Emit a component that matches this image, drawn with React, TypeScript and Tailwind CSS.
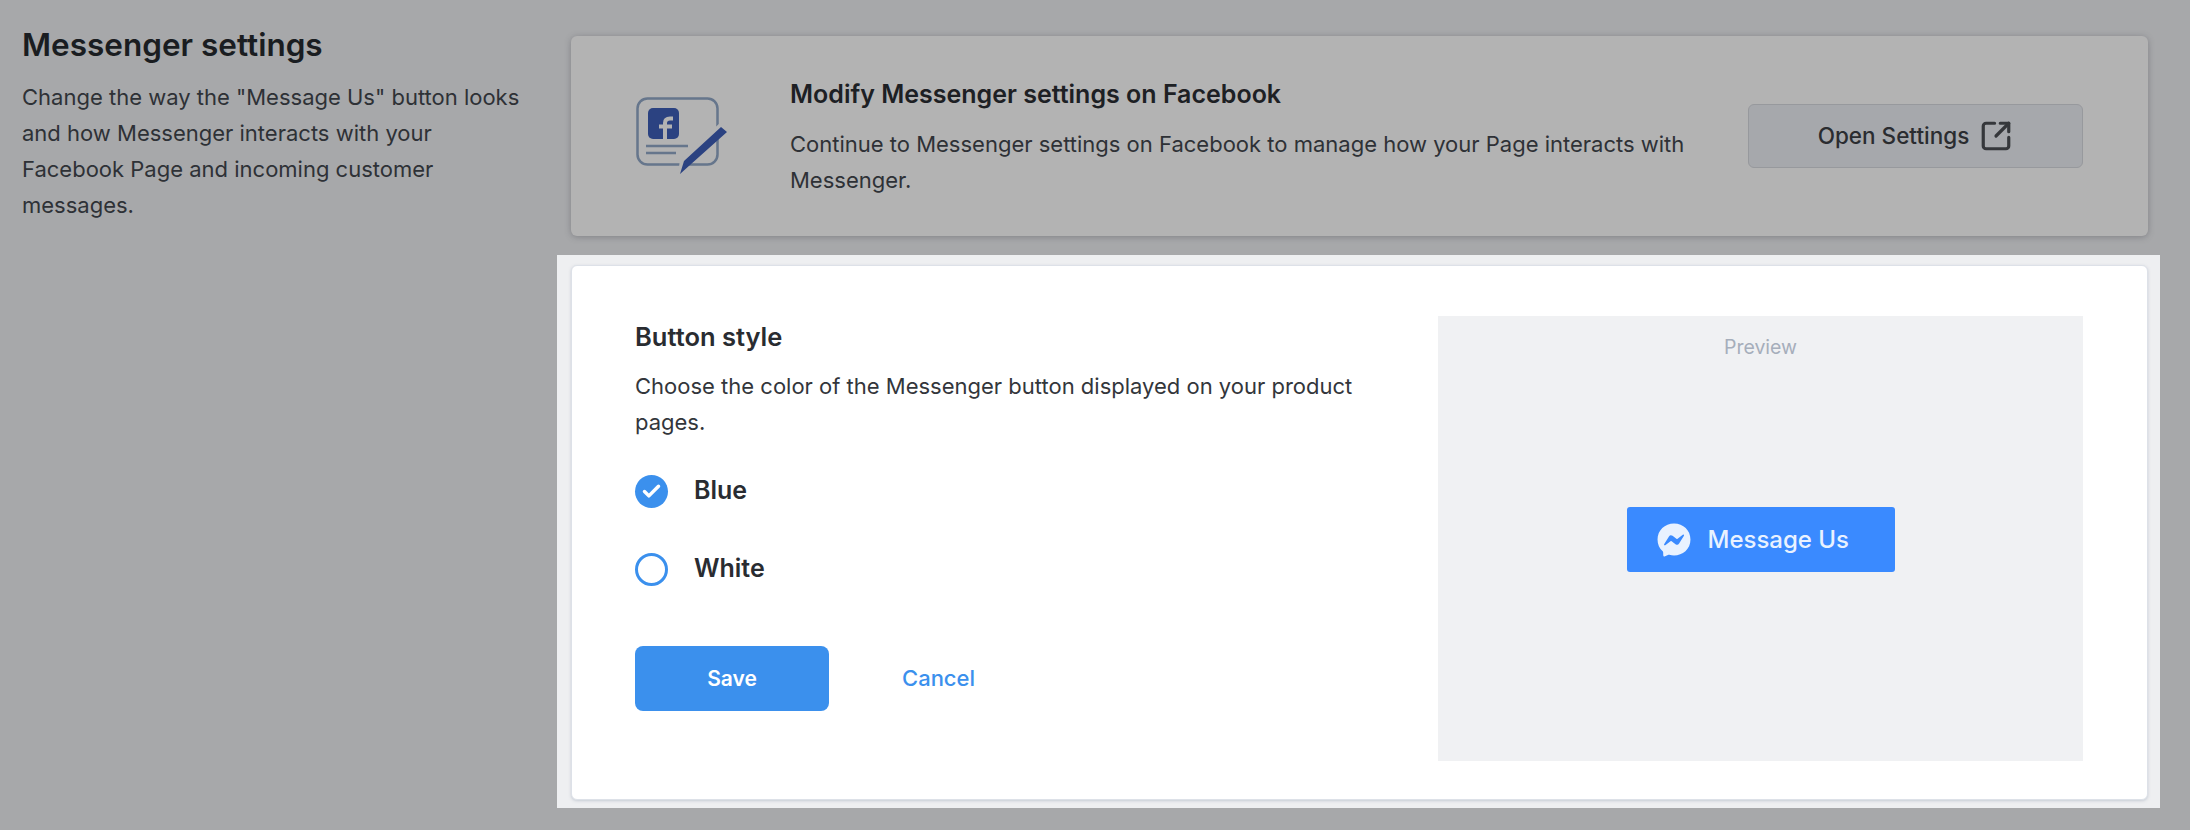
import { SquareArrowOutUpRight, Check } from 'lucide-react';
import { FaFacebookMessenger } from 'react-icons/fa';

const ModifyIcon = () => (
  <svg className="shrink-0" width="92" height="78" viewBox="0 0 92 78" fill="none">
    <rect x="1.500" y="1.500" width="80" height="66" rx="10" stroke="#66768c" strokeWidth="2.500" />
    <rect x="12" y="11" width="31" height="31" rx="5" fill="#2b4281" />
    <path d="M29 42V26c0-3 1.500-4.500 5-4.500h3M23 29.500h13" stroke="#b3b3b3" strokeWidth="4" />
    <path d="M10 49h42M10 56h30" stroke="#66768c" strokeWidth="2.500" />
    <path d="M42 78l2-16L84 26l9 7-42 36z" fill="#b3b3b3" />
    <path d="M44 77l4-13L85 30l6 5-37 33z" fill="#2b4281" />
  </svg>
);

type StyleOptionProps = {
  label: string;
  checked?: boolean;
};

const StyleOption = ({ label, checked }: StyleOptionProps) => (
  <div className="flex h-[32px] items-center gap-[26px]">
    {checked ? (
      <span className="flex h-[33px] w-[33px] items-center justify-center rounded-full bg-[#3b90ed]">
        <Check className="h-[21px] w-[21px] text-white" strokeWidth={4} />
      </span>
    ) : (
      <span className="h-[33px] w-[33px] rounded-full border-[3px] border-[#3b90ed]" />
    )}
    <span className="text-[25px] font-semibold text-[#292c31]">{label}</span>
  </div>
);

const App = () => {
  return (
    <div className="flex h-[830px] w-[2190px] overflow-hidden bg-[#a7a8aa] font-['Inter',sans-serif] text-[#292c31]">
      <aside className="w-[571px] shrink-0 pl-[22px] pr-[45px] pt-[25px]">
        <h2 className="text-[31.500px] leading-[40px] font-semibold text-[#1a1d21]">Messenger settings</h2>
        <p className="mt-[14px] text-[22px] leading-[36px] text-[#2e3136]">
          Change the way the "Message Us" button looks and how Messenger interacts with your Facebook Page and incoming
          customer messages.
        </p>
      </aside>

      <main className="w-[1577px] shrink-0 pt-[36px]">
        <section className="flex h-[200px] items-center rounded-[6px] bg-[#b3b3b3] pl-[65px] pr-[65px] shadow-[0_1px_6px_rgba(60,60,70,0.35)]">
          <ModifyIcon />
          <div className="ml-[62px] mt-[3px] w-[900px]">
            <h3 className="text-[25px] leading-[34px] font-semibold text-[#1d2024]">Modify Messenger settings on Facebook</h3>
            <p className="mt-[15px] text-[22px] leading-[36px] text-[#2e3136]">
              Continue to Messenger settings on Facebook to manage how your Page interacts with Messenger.
            </p>
          </div>
          <button className="ml-auto flex h-[64px] w-[335px] items-center justify-center gap-[10px] rounded-[6px] border border-[#97999d] bg-[#a6a8ac] text-[22.500px] font-medium text-[#2a2c30]">
            Open Settings
            <SquareArrowOutUpRight className="h-[34px] w-[34px] text-[#35373b]" strokeWidth={2.25} />
          </button>
        </section>

        <div className="-ml-[14px] -mr-[12px] mt-[19px] bg-[#eeeff1] pb-[8px] pl-[14px] pr-[12px] pt-[10px]">
          <section className="flex h-[535px] rounded-[6px] border border-[#dde1e8] bg-white pb-[38px] pl-[63px] pr-[63px] pt-[50px] shadow-[0_1px_3px_rgba(160,170,185,0.5)]">
            <div className="w-[803px] shrink-0">
              <h3 className="mt-[5px] text-[25.500px] leading-[32px] font-semibold text-[#292c31]">Button style</h3>
              <p className="mt-[15px] w-[740px] text-[22px] leading-[36px] text-[#33363b]">
                Choose the color of the Messenger button displayed on your product pages.
              </p>
              <div className="mt-[35px] flex flex-col gap-[46px]">
                <StyleOption label="Blue" checked />
                <StyleOption label="White" />
              </div>
              <div className="mt-[61px] flex items-center">
                <button className="h-[65px] w-[194px] rounded-[8px] bg-[#3b90ed] text-[21px] font-semibold text-white">Save</button>
                <button className="ml-[73px] text-[22px] font-medium text-[#3b90ed]">Cancel</button>
              </div>
            </div>
            <div className="flex h-[445px] w-[645px] shrink-0 flex-col items-center bg-[#f0f1f3] pt-[18px]">
              <span className="text-[19.500px] leading-[26px] text-[#a6aebb]">Preview</span>
              <button className="mt-[147px] flex h-[65px] w-[268px] items-center gap-[17px] rounded-[3px] bg-[#3a8aff] pl-[30px] text-[24px] font-medium text-[#e9f2ff]">
                <FaFacebookMessenger className="h-[34px] w-[34px]" />
                Message Us
              </button>
            </div>
          </section>
        </div>
      </main>
    </div>
  );
};

export default App;
